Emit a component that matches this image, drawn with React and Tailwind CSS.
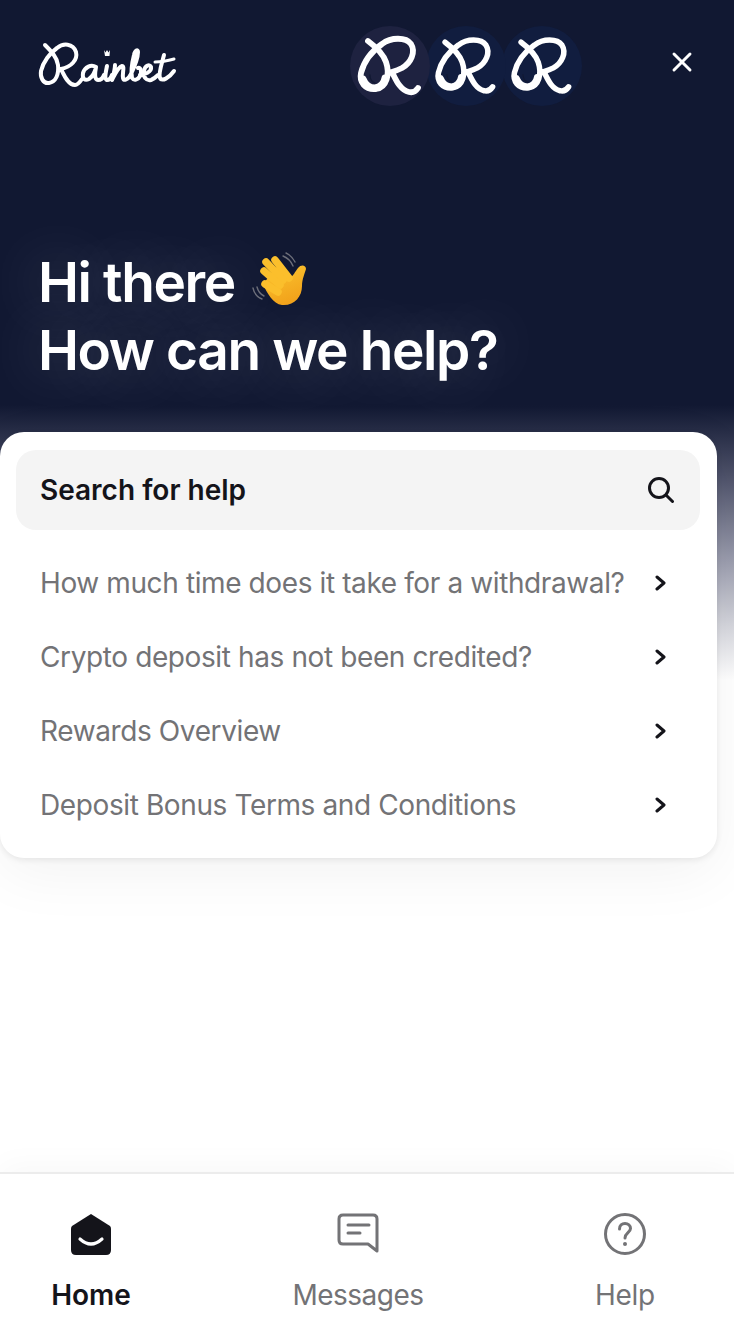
import { X } from 'lucide-react';

const questions = [
  'How much time does it take for a withdrawal?',
  'Crypto deposit has not been credited?',
  'Rewards Overview',
  'Deposit Bonus Terms and Conditions',
];

function RMark({ className }) {
  return (
    <svg viewBox="0 0 80 80" className={className} fill="none">
      <path
        d="M18 15 C26 21 33 27 36 36 C40 48 37 61 26 63 C15 64 9 56 11 47 C14 35 22 25 32 18 C41 11 56 11 61 18 C66 26 61 37 52 42 C48 44 45 45 42 46 C46 54 50 64 59 66 C63 67 66 65 68 62"
        stroke="#fff"
        strokeWidth="5.8"
        strokeLinecap="round"
        strokeLinejoin="round"
      />
      <path d="M35 52 C34 58 31 61 25 62 C19 62 15 58 13 53" stroke="#fff" strokeWidth="7" strokeLinecap="round" />
      <path d="M20 49 C20 53 22 56 25 57" stroke="#121933" strokeWidth="1.3" strokeLinecap="round" />
    </svg>
  );
}

function Wordmark() {
  return (
    <svg viewBox="0 0 160 70" className="h-[70px] w-[160px]" fill="none" aria-label="Rainbet">
      <g stroke="#fff" strokeLinecap="round" strokeLinejoin="round" strokeWidth="4">
        <path d="M15 14 C21 20 27 26 28 34 C29 43 26 51 19 52 C13 53 10 46 11 40 C13 31 20 22 27 17 C33 12 43 12 46 21 C48 29 41 36 31 38 C34 44 38 54 45 54 C48 54 50 51 52 48" />
        <path d="M66 36 C61 33 55 36 53 42 C52 48 55 50 59 48 C62 46 65 41 66 36 C65 41 64 49 68 49 C71 49 73 47 74 44" />
        <path d="M77 35 C76 40 74 48 77 49 C79 49 81 47 82 44" />
        <path d="M85 34 C85 39 83 45 82 49 C85 43 88 36 92 35 C95 35 92 43 93 47 C94 50 97 49 100 45" />
        <path d="M100 45 C104 37 108 27 108 21 C108 18 105 19 104 24 C102 32 101 42 102 47 C104 50 108 49 110 45 C112 41 111 36 108 37" />
        <path d="M110 44 C114 44 122 41 121 36 C120 33 115 34 114 40 C113 46 116 50 121 49 C124 48 126 46 128 44" />
        <path d="M134 24 C132 32 128 43 130 47 C132 51 139 47 144 40" />
        <path d="M125 31 C130 31 137 30 144 28" strokeWidth="3" />
      </g>
      <path d="M74 19 L75.5 21.5 L77 19 L78.5 21.5 L80 19 L79.5 25 L75 25 Z" fill="#fff" />
    </svg>
  );
}

function WaveEmoji() {
  return (
    <svg viewBox="0 0 80 70" className="h-[70px] w-[80px]" fill="none">
      <defs>
        <linearGradient id="hand" x1="0" y1="0" x2="0.4" y2="1">
          <stop offset="0" stopColor="#fcc832" />
          <stop offset="1" stopColor="#f2a31b" />
        </linearGradient>
      </defs>
      <g stroke="#6d6f7a" strokeWidth="1.4" strokeLinecap="round">
        <path d="M41 11 C46 13 49 16 51 21" />
        <path d="M44 8 C48 10 51 13 53 17" />
        <path d="M11 43 C12 48 15 52 20 54" />
        <path d="M15 42 C16 46 18 49 22 51" />
      </g>
      <path
        d="M21 39 C25 48 31 59 40 60 C52 61 60 52 60 41 C60 34 63 28 64 24 C64 20 59 19 56 23 C53 27 51 31 49 32 L38 18 Z"
        fill="url(#hand)"
      />
      <g stroke="#fbbf2c" strokeWidth="7.5" strokeLinecap="round">
        <path d="M33 15 L47 33" />
        <path d="M24 17 L41 35" />
        <path d="M22 26 L38 40" />
        <path d="M23 39 L36 47" />
      </g>
    </svg>
  );
}

function Chevron() {
  return (
    <svg width="12" height="16" viewBox="0 0 12 16" fill="none" className="shrink-0">
      <path d="M2 2 L9 8 L2 14" stroke="#14141a" strokeWidth="3" strokeLinecap="round" strokeLinejoin="round" />
    </svg>
  );
}

export default function App() {
  return (
    <div className="flex h-[1324px] w-[734px] flex-col overflow-hidden bg-[linear-gradient(#111832_405px,#4d5169_475px,#9a9cad_560px,#d4d5dc_625px,#ffffff_680px)] [font-family:Inter,sans-serif]">
      <header className="flex h-[80px] mt-[26px] items-center pl-[30px]">
        <Wordmark />
        <div className="ml-[160px] flex">
          <div className="relative z-30 flex h-[80px] w-[80px] items-center justify-center rounded-full bg-[#1e2240]">
            <RMark className="h-[80px] w-[80px]" />
          </div>
          <div className="relative z-20 -ml-[4px] flex h-[80px] w-[80px] items-center justify-center rounded-full bg-[#111d3f]">
            <RMark className="h-[76px] w-[76px]" />
          </div>
          <div className="relative z-10 -ml-[4px] flex h-[80px] w-[80px] items-center justify-center rounded-full bg-[#111d3f]">
            <RMark className="h-[76px] w-[76px]" />
          </div>
        </div>
        <X className="ml-[84px] mt-[-8px] h-[32px] w-[32px] text-white" strokeWidth={2.2} />
      </header>

      <h1 className="mt-[142px] px-[38px] text-[55px] font-semibold leading-[68px] tracking-[-1.4px] text-white [text-shadow:0_0_60px_rgba(255,255,255,0.3)]">
        <span className="flex h-[68px] items-center">
          Hi there
          <span className="ml-[7px] -mt-[4px]"><WaveEmoji /></span>
        </span>
        <span className="block">How can we help?</span>
      </h1>

      <section className="mt-[48px] mr-[17px] rounded-[24px] bg-white pb-[16px] pl-[16px] pr-[17px] pt-[18px] shadow-[0_2px_6px_rgba(0,0,0,0.08),0_16px_60px_rgba(0,0,0,0.05)]">
        <div className="flex h-[80px] items-center justify-between rounded-[20px] bg-[#f4f4f4] pl-[24px] pr-[26px]">
          <span className="text-[28px] font-semibold text-[#14141a]">Search for help</span>
          <svg width="26" height="26" viewBox="0 0 26 26" fill="none">
            <circle cx="11" cy="11" r="9.5" stroke="#14141a" strokeWidth="3" />
            <path d="M18 18 L24.5 24.5" stroke="#14141a" strokeWidth="3" strokeLinecap="round" />
          </svg>
        </div>
        <ul className="mt-[16px]">
          {questions.map((q) => (
            <li key={q} className="flex h-[74px] items-center justify-between pl-[24px] pr-[33px]">
              <span className="text-[28px] tracking-[-0.39px] text-[#737376]">{q}</span>
              <Chevron />
            </li>
          ))}
        </ul>
      </section>

      <nav className="mt-auto flex h-[152px] border-t-2 border-[#ececec] bg-white shadow-[0_-6px_30px_rgba(0,0,0,0.03)]">
        <div className="flex w-[182px] flex-col items-center pt-[39px]">
          <svg width="42" height="42" viewBox="0 0 42 42" fill="none">
            <path
              d="M21 1 L40 13 Q41 14 41 16 V37 Q41 42 36 42 H6 Q1 42 1 37 V16 Q1 14 2 13 Z"
              fill="#14141a"
            />
            <path d="M10 26 Q21 36 32 26" stroke="#fff" strokeWidth="3.2" strokeLinecap="round" />
          </svg>
          <span className="mt-[20px] text-[28px] font-semibold leading-[40px] text-[#14141a]">Home</span>
        </div>
        <div className="flex w-[352px] flex-col items-center pt-[39px]">
          <svg width="42" height="42" viewBox="0 0 42 42" fill="none">
            <path
              d="M6 2 H36 Q40 2 40 6 V38 L31 31 H6 Q2 31 2 27 V6 Q2 2 6 2 Z"
              stroke="#737376"
              strokeWidth="3"
              strokeLinejoin="round"
            />
            <path d="M11 12 H32 M11 20 H23" stroke="#737376" strokeWidth="3" strokeLinecap="round" />
          </svg>
          <span className="mt-[20px] text-[28px] leading-[40px] tracking-[-0.5px] text-[#737376]">Messages</span>
        </div>
        <div className="flex w-[182px] flex-col items-center pt-[39px]">
          <svg width="42" height="42" viewBox="0 0 42 42" fill="none">
            <circle cx="21" cy="21" r="19.5" stroke="#737376" strokeWidth="3" />
            <path
              d="M15.5 16 C15.5 12.5 18 10.5 21 10.5 C24 10.5 26.5 12.5 26.5 15.5 C26.5 19.5 21 20 21 25"
              stroke="#737376"
              strokeWidth="3"
              strokeLinecap="round"
            />
            <circle cx="21" cy="31" r="2" fill="#737376" />
          </svg>
          <span className="mt-[20px] text-[28px] leading-[40px] tracking-[-0.3px] text-[#737376]">Help</span>
        </div>
      </nav>
    </div>
  );
}
